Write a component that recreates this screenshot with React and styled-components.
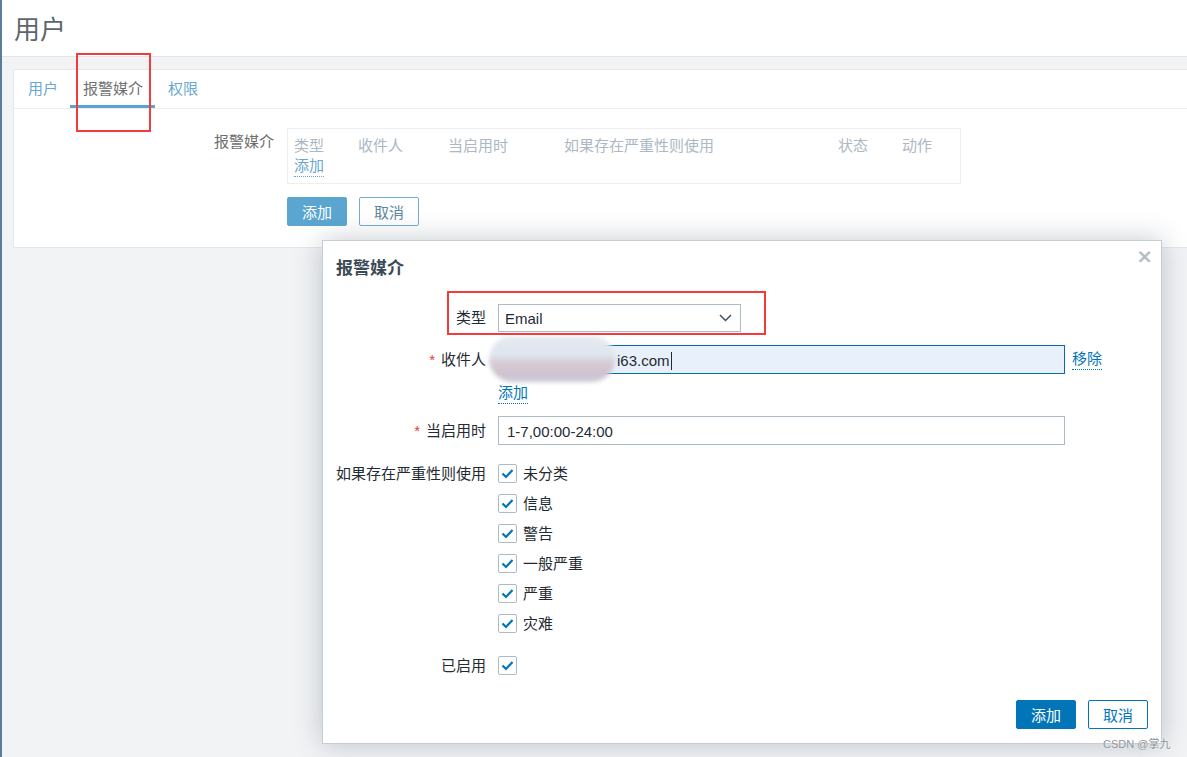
import styled, { createGlobalStyle } from 'styled-components';

const GlobalStyle = createGlobalStyle`
  html, body {
    margin: 0;
    padding: 0;
    background: #f2f3f5;
    font-family: "Liberation Sans", "Noto Sans CJK SC", sans-serif;
    font-size: 15px;
  }
  * {
    box-sizing: border-box;
  }
`;

const Page = styled.div`
  position: relative;
  display: flex;
  width: 1187px;
  height: 757px;
  overflow: hidden;
  background: #f2f3f5;
`;

const SideEdge = styled.div`
  width: 2px;
  flex: none;
  background: #587d9e;
`;

const Main = styled.div`
  flex: 1;
  display: flex;
  flex-direction: column;
`;

const Header = styled.header`
  height: 57px;
  background: #fff;
  border-bottom: 1px solid #e3e6e9;
  display: flex;
  align-items: center;
  padding-left: 12px;
  padding-bottom: 2px;
`;

const Title = styled.h1`
  margin: 0;
  font-size: 26px;
  font-weight: normal;
  color: #5e666d;
`;

const Content = styled.div`
  padding: 12px 0 0 11px;
`;

const Card = styled.section`
  background: #fff;
  border: 1px solid #e4e8eb;
  border-right: none;
  height: 179px;
`;

const Tabs = styled.nav`
  display: flex;
  height: 39px;
  border-bottom: 1px solid #eceff1;
  padding-left: 1px;
`;

const Tab = styled.div`
  padding: 0 12px 0 13px;
  line-height: 37px;
  color: ${p => (p.$active ? '#707070' : '#69a8d2')};
  border-bottom: 3px solid ${p => (p.$active ? '#59a5d0' : 'transparent')};
`;

const FormRow = styled.div`
  display: grid;
  grid-template-columns: 260px 674px;
  column-gap: 13px;
  margin-top: 19px;
`;

const FieldLabel = styled.div`
  text-align: right;
  color: #6d6d6d;
  line-height: 20px;
  padding-top: 4px;
`;

const MediaTable = styled.div`
  border: 1px solid #eceff1;
  padding: 7px 6px 6px;
  height: 56px;
`;

const TableHead = styled.div`
  display: grid;
  grid-template-columns: 64px 90px 116px 274px 64px auto;
  color: #acb8c3;
  line-height: 20px;
`;

const DottedLink = styled.span`
  display: inline-block;
  color: ${p => p.$color || '#0275b8'};
  line-height: 20px;
  border-bottom: 1px dotted ${p => p.$color || '#0275b8'};
`;

const ButtonRow = styled.div`
  display: flex;
  gap: 12px;
  margin-top: ${p => p.$mt || 13}px;
  justify-content: ${p => (p.$end ? 'flex-end' : 'flex-start')};
`;

const Button = styled.button`
  height: 29px;
  width: 60px;
  border-radius: 2px;
  font-family: inherit;
  font-size: 15px;
  padding: 0;
  cursor: pointer;
  background: ${p => (p.$primary ? p.$tone : '#fff')};
  color: ${p => (p.$primary ? '#fff' : p.$text || p.$tone)};
  border: 1px solid ${p => p.$tone};
`;

const Modal = styled.div`
  position: absolute;
  left: 322px;
  top: 240px;
  width: 840px;
  height: 504px;
  background: #fff;
  border: 1px solid #c5cdd3;
  box-shadow: 0 0 26px rgba(70, 90, 105, 0.32);
  padding: 0 13px;
`;

const ModalTitle = styled.h2`
  margin: 0;
  padding-top: 17px;
  line-height: 22px;
  font-size: 17px;
  font-weight: bold;
  color: #3b4a55;
  height: 63px;
`;

const CloseX = styled.span`
  position: absolute;
  top: 3px;
  right: 8px;
  font-size: 20px;
  font-weight: bold;
  color: #b5bdc3;
  font-family: "DejaVu Sans", sans-serif;
`;

const ModalForm = styled.div`
  display: grid;
  grid-template-columns: 150px 1fr;
  column-gap: 12px;
`;

const Label = styled.div`
  text-align: right;
  color: #1f2c33;
  align-self: ${p => (p.$top ? 'start' : 'center')};
  line-height: ${p => (p.$top ? '19px' : '20px')};
  margin-top: ${p => p.$mt || 0}px;
  white-space: nowrap;
`;

const Star = styled.span`
  color: #e43a3a;
  margin-right: 6px;
`;

const Field = styled.div`
  display: flex;
  align-items: center;
  gap: 7px;
  margin-top: ${p => p.$mt || 0}px;
  position: relative;
`;

const Select = styled.div`
  width: 243px;
  height: 28px;
  border: 1px solid #acbbc4;
  display: flex;
  align-items: center;
  justify-content: space-between;
  padding: 0 8px 0 6px;
  color: #1f2c33;
`;

const TextInput = styled.div`
  width: 567px;
  height: 29px;
  border: 1px solid ${p => (p.$focus ? '#0b6aa5' : '#acbbc4')};
  background: ${p => (p.$focus ? '#e8f0fb' : '#fff')};
  display: flex;
  align-items: center;
  padding-left: ${p => p.$indent || 8}px;
  padding-top: 2px;
  color: #1f2c33;
`;

const Caret = styled.span`
  display: inline-block;
  width: 1px;
  height: 18px;
  background: #1f2c33;
  margin-left: 1px;
`;

const Blur = styled.div`
  position: absolute;
  left: -9px;
  top: -9px;
  width: 126px;
  height: 46px;
  border-radius: 23px;
  background: linear-gradient(180deg, #e6ebf2 0%, #dfe5ee 42%, #d6cad4 58%, #d0c4cf 80%, #cbcad6 100%);
  filter: blur(2px);
`;

const AddLine = styled.div`
  margin-top: 9px;
  margin-bottom: 12px;
`;

const CheckList = styled.div`
  display: flex;
  flex-direction: column;
  gap: 11px;
  margin-top: ${p => p.$mt || 0}px;
`;

const CheckItem = styled.label`
  display: flex;
  align-items: center;
  gap: 6px;
  color: #1f2c33;
  line-height: 19px;
`;

const Box = styled.span`
  width: 19px;
  height: 19px;
  border: 1px solid #acbbc4;
  border-radius: 2px;
  display: flex;
  align-items: center;
  justify-content: center;
  background: #fff;
`;

const Annotation = styled.div`
  position: absolute;
  border: 2px solid #f33b3b;
`;

const Watermark = styled.div`
  position: absolute;
  left: 1103px;
  top: 735px;
  font-size: 11px;
  color: #8e9398;
  text-shadow: 0 0 2px #fff;
`;

const Check = () => (
  <Box>
    <svg width="13" height="11" viewBox="0 0 13 11">
      <polyline points="1.5,5.5 5,9 11.5,2" fill="none" stroke="#0275b8" strokeWidth="2.2" />
    </svg>
  </Box>
);

const severities = ['未分类', '信息', '警告', '一般严重', '严重', '灾难'];

export default function App() {
  return (
    <Page>
      <GlobalStyle />
      <SideEdge />
      <Main>
        <Header>
          <Title>用户</Title>
        </Header>
        <Content>
          <Card>
            <Tabs>
              <Tab>用户</Tab>
              <Tab $active>报警媒介</Tab>
              <Tab>权限</Tab>
            </Tabs>
            <FormRow>
              <FieldLabel>报警媒介</FieldLabel>
              <div>
                <MediaTable>
                  <TableHead>
                    <span>类型</span>
                    <span>收件人</span>
                    <span>当启用时</span>
                    <span>如果存在严重性则使用</span>
                    <span>状态</span>
                    <span>动作</span>
                  </TableHead>
                  <DottedLink $color="#6aa6d0">添加</DottedLink>
                </MediaTable>
                <ButtonRow>
                  <Button $primary $tone="#5ba6d1">添加</Button>
                  <Button $tone="#6eaed6" $text="#5d86a3">取消</Button>
                </ButtonRow>
              </div>
            </FormRow>
          </Card>
        </Content>
      </Main>

      <Modal>
        <CloseX>×</CloseX>
        <ModalTitle>报警媒介</ModalTitle>
        <ModalForm>
          <Label>类型</Label>
          <Field>
            <Select>
              <span>Email</span>
              <svg width="13" height="8" viewBox="0 0 13 8">
                <polyline points="1,1 6.5,6.5 12,1" fill="none" stroke="#3b4a55" strokeWidth="1.4" />
              </svg>
            </Select>
          </Field>

          <Label $mt={13}>
            <Star>*</Star>收件人
          </Label>
          <Field $mt={13}>
            <TextInput $focus $indent={118}>
              <span>i63.com</span>
              <Caret />
            </TextInput>
            <DottedLink>移除</DottedLink>
            <Blur />
          </Field>

          <div />
          <AddLine>
            <DottedLink>添加</DottedLink>
          </AddLine>

          <Label>
            <Star>*</Star>当启用时
          </Label>
          <Field>
            <TextInput>1-7,00:00-24:00</TextInput>
          </Field>

          <Label $top $mt={19}>如果存在严重性则使用</Label>
          <CheckList $mt={19}>
            {severities.map(s => (
              <CheckItem key={s}>
                <Check />
                {s}
              </CheckItem>
            ))}
          </CheckList>

          <Label $top $mt={23}>已启用</Label>
          <CheckList $mt={23}>
            <CheckItem>
              <Check />
            </CheckItem>
          </CheckList>
        </ModalForm>
        <ButtonRow $end $mt={25}>
          <Button $primary $tone="#0275b8">添加</Button>
          <Button $tone="#0275b8">取消</Button>
        </ButtonRow>
      </Modal>

      <Annotation style={{ left: 76, top: 53, width: 75, height: 79 }} />
      <Annotation style={{ left: 447, top: 291, width: 319, height: 44 }} />
      <Watermark>CSDN @掌九</Watermark>
    </Page>
  );
}
